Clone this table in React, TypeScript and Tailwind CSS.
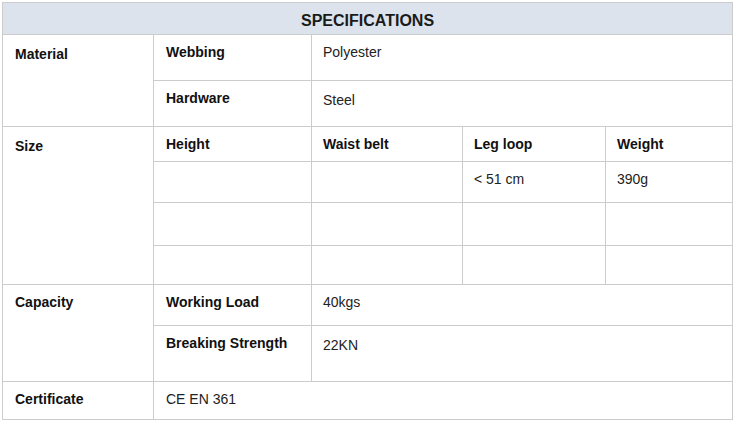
import React from 'react';

const base = 'border border-[#cccccc] align-top pt-[10px] pb-0 pr-2 text-left';
const label = `${base} pl-[12px] font-bold text-[#111111]`;
const labelR = `${base} pl-[11px] font-bold text-[#111111]`;
const value = `${base} pl-[11px] text-[#222222]`;
const valueL = `${base} pl-[12px] text-[#222222]`;
const side = `${base} pl-[12px] pt-[12px] font-bold text-[#111111]`;

export default function App() {
  return (
    <div className="bg-white w-[735px] h-[423px] pt-[2px] pl-[2px] font-['Liberation_Sans',Arial,sans-serif] text-[14px] leading-[15px]">
      <table className="table-fixed border-collapse w-[730px]">
        <colgroup>
          <col className="w-[151px]" />
          <col className="w-[158px]" />
          <col className="w-[151px]" />
          <col className="w-[143px]" />
          <col className="w-[127px]" />
        </colgroup>
        <tbody>
          {/* header */}
          <tr className="h-[32px]">
            <th colSpan={5} className="border border-[#cccccc] bg-[#dce3ed] text-center text-[16px] font-bold text-[#1a1a1a] pt-[3px] align-middle">
              SPECIFICATIONS
            </th>
          </tr>

          {/* material */}
          <tr className="h-[46px]">
            <td rowSpan={2} className={side}>Material</td>
            <td className={label}>Webbing</td>
            <td colSpan={3} className={value}>Polyester</td>
          </tr>
          <tr className="h-[46px]">
            <td className={label}>Hardware</td>
            <td colSpan={3} className={`${value} pt-[12px]`}>Steel</td>
          </tr>

          {/* size */}
          <tr className="h-[35px]">
            <td rowSpan={4} className={side}>Size</td>
            <td className={label}>Height</td>
            <td className={labelR}>Waist belt</td>
            <td className={labelR}>Leg loop</td>
            <td className={labelR}>Weight</td>
          </tr>
          <tr className="h-[41px]">
            <td className={value}></td>
            <td className={value}></td>
            <td className={value}>&lt; 51 cm</td>
            <td className={value}>390g</td>
          </tr>
          <tr className="h-[43px]">
            <td className={value}></td>
            <td className={value}></td>
            <td className={value}></td>
            <td className={value}></td>
          </tr>
          <tr className="h-[39px]">
            <td className={value}></td>
            <td className={value}></td>
            <td className={value}></td>
            <td className={value}></td>
          </tr>

          {/* capacity */}
          <tr className="h-[41px]">
            <td rowSpan={2} className={label}>Capacity</td>
            <td className={label}>Working Load</td>
            <td colSpan={3} className={value}>40kgs</td>
          </tr>
          <tr className="h-[56px]">
            <td className={label}>Breaking Strength</td>
            <td colSpan={3} className={`${value} pt-[12px]`}>22KN</td>
          </tr>

          {/* certificate */}
          <tr className="h-[38px]">
            <td className={label}>Certificate</td>
            <td colSpan={4} className={valueL}>CE EN 361</td>
          </tr>
        </tbody>
      </table>
    </div>
  );
}
